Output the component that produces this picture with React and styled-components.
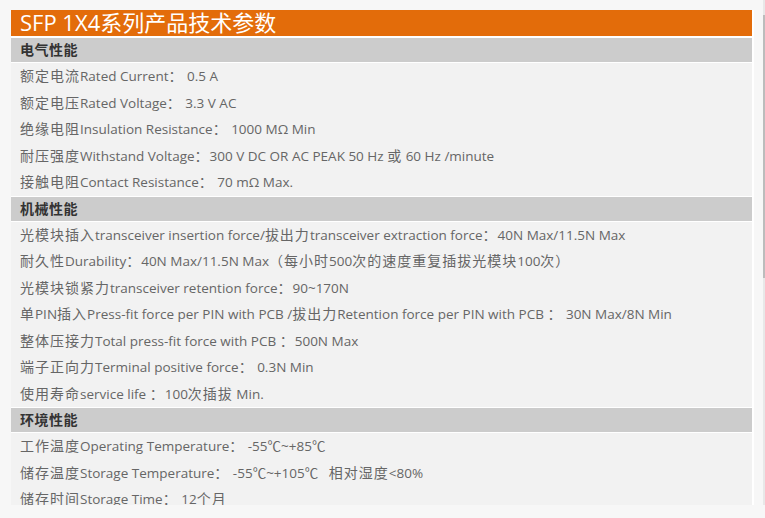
import React from "react";
import styled, { createGlobalStyle } from "styled-components";

const Global = createGlobalStyle`
  html, body { margin: 0; padding: 0; background: #f7f7f7; }
  body { font-family: "Open Sans", "Noto Sans CJK SC", sans-serif; }
`;

const Viewport = styled.div`
  position: relative;
  width: 765px;
  height: 505px;
  overflow: hidden;
  background: #f7f7f7;
`;

const Sheet = styled.div`
  margin: 10px 0 0 11px;
  width: 741px;
  padding-right: 2px;
  background: #ffffff;
  display: flex;
  flex-direction: column;
`;

const Title = styled.h1`
  margin: 0 0 2px 0;
  height: 26px;
  padding-left: 9px;
  background: #e36c0a;
  color: #ffffff;
  font-family: "Open Sans", "Noto Sans CJK SC", sans-serif;
  font-size: 22px;
  font-weight: 400;
  line-height: 25px;
  white-space: nowrap;
`;

const Section = styled.section`
  display: flex;
  flex-direction: column;
  margin-bottom: 1px;
`;

const SectionHead = styled.h2`
  margin: 0 0 1px 0;
  box-sizing: border-box;
  height: 24px;
  padding-left: 9px;
  background: #cccccc;
  color: #333333;
  font-family: "Noto Sans CJK SC", sans-serif;
  font-size: 14px;
  font-weight: 700;
  letter-spacing: 0.5px;
  line-height: 22px;
`;

const Rows = styled.div`
  background: #f2f2f2;
  display: flex;
  flex-direction: column;
`;

const Row = styled.div`
  height: 26.5px;
  line-height: 24.5px;
  padding-left: 9px;
  color: #666666;
  font-size: 13.5px;
  white-space: nowrap;
`;

const Han = styled.span`
  font-family: "Noto Sans CJK SC", sans-serif;
  font-size: 14px;
  letter-spacing: 1px;
`;

const Track = styled.div`
  position: absolute;
  top: 0;
  right: 0;
  width: 2px;
  height: 505px;
  background: #e8e8e8;
`;

const Thumb = styled.div`
  position: absolute;
  top: 15px;
  left: 0;
  width: 2px;
  height: 263px;
  background: #bcbcbc;
`;

const CJK = /([\u3000-\u303f\u3400-\u9fff\uff00-\uffef]+)/;

function Mixed({ text }) {
  return text.split(CJK).filter(Boolean).map((part, i) =>
    CJK.test(part) ? <Han key={i}>{part}</Han> : <React.Fragment key={i}>{part}</React.Fragment>
  );
}

const sections = [
  {
    name: "电气性能",
    rows: [
      "额定电流Rated Current： 0.5 A",
      "额定电压Rated Voltage： 3.3 V AC",
      "绝缘电阻Insulation Resistance： 1000 MΩ Min",
      "耐压强度Withstand Voltage：300 V DC OR AC PEAK 50 Hz 或 60 Hz /minute",
      "接触电阻Contact Resistance： 70 mΩ Max.",
    ],
  },
  {
    name: "机械性能",
    rows: [
      "光模块插入transceiver insertion force/拔出力transceiver extraction force：40N Max/11.5N Max",
      "耐久性Durability：40N Max/11.5N Max（每小时500次的速度重复插拔光模块100次）",
      "光模块锁紧力transceiver retention force：90~170N",
      "单PIN插入Press-fit force per PIN with PCB /拔出力Retention force per PIN with PCB ： 30N Max/8N Min",
      "整体压接力Total press-fit force with PCB ：500N Max",
      "端子正向力Terminal positive force： 0.3N Min",
      "使用寿命service life ：100次插拔 Min.",
    ],
  },
  {
    name: "环境性能",
    rows: [
      "工作温度Operating Temperature： -55℃~+85℃",
      "储存温度Storage Temperature： -55℃~+105℃\u00a0\u00a0 相对湿度<80%",
      "储存时间Storage Time： 12个月",
    ],
  },
];

export default function App() {
  return (
    <>
      <Global />
      <Viewport>
        <Sheet>
          <Title>SFP 1X4系列产品技术参数</Title>
          {sections.map((s) => (
            <Section key={s.name}>
              <SectionHead>{s.name}</SectionHead>
              <Rows>
                {s.rows.map((r) => (
                  <Row key={r}><Mixed text={r} /></Row>
                ))}
              </Rows>
            </Section>
          ))}
        </Sheet>
        <Track><Thumb /></Track>
      </Viewport>
    </>
  );
}
